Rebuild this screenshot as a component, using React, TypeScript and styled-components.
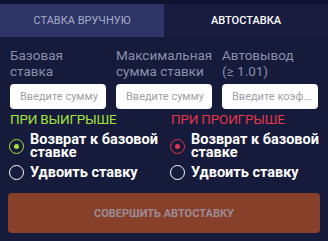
import React, { useState } from "react";
import styled, { createGlobalStyle } from "styled-components";

const Global = createGlobalStyle`
  html, body {
    margin: 0;
    padding: 0;
    background: #161a3b;
  }
  * {
    box-sizing: border-box;
  }
`;

const Panel = styled.div`
  width: 328px;
  height: 241px;
  background: #161a3b;
  border-top: 4px solid #0f1230;
  font-family: Roboto, "Liberation Sans", sans-serif;
  overflow: hidden;
`;

const Tabs = styled.div`
  display: grid;
  grid-template-columns: 164px 1fr;
  height: 33px;
`;

const Tab = styled.div<{ $active?: boolean }>`
  display: flex;
  align-items: center;
  justify-content: center;
  font-size: 11px;
  text-transform: uppercase;
  background: ${(p) => (p.$active ? "#181b3e" : "#2e3566")};
  color: ${(p) => (p.$active ? "#ffffff" : "#a5abc9")};
  font-weight: ${(p) => (p.$active ? 500 : 400)};
  cursor: pointer;
`;

const Fields = styled.div`
  display: grid;
  grid-template-columns: repeat(3, 96px);
  column-gap: 10px;
  padding: 0 10px;
  margin-top: 10px;
`;

const Field = styled.div`
  display: flex;
  flex-direction: column;
  gap: 5px;
`;

const Label = styled.div`
  height: 32px;
  font-size: 13.5px;
  line-height: 16px;
  color: #8a8fab;
`;

const Input = styled.input`
  width: 96px;
  height: 25px;
  border: none;
  border-radius: 4px;
  background: #ffffff;
  padding: 0 4px 0 10px;
  font-family: inherit;
  font-size: 11px;
  outline: none;
  &::placeholder {
    color: #a0a0a6;
  }
`;

const Outcomes = styled.div`
  display: grid;
  grid-template-columns: 161px 1fr;
  padding: 0 9px;
  margin-top: 3px;
`;

const Outcome = styled.div`
  display: flex;
  flex-direction: column;
  gap: 6px;
`;

const Heading = styled.div<{ $color: string }>`
  font-size: 13.5px;
  line-height: 14px;
  text-transform: uppercase;
  letter-spacing: -0.2px;
  color: ${(p) => p.$color};
  margin-left: 1px;
  margin-bottom: 1px;
`;

const Option = styled.label`
  display: flex;
  align-items: center;
  gap: 6px;
  color: #ffffff;
  font-size: 14.5px;
  font-weight: 700;
  line-height: 13px;
  cursor: pointer;
`;

const Dot = styled.span<{ $color: string; $on: boolean }>`
  flex: none;
  width: 15px;
  height: 15px;
  border-radius: 50%;
  border: 1.5px solid ${(p) => (p.$on ? p.$color : "#ffffff")};
  display: flex;
  align-items: center;
  justify-content: center;
  &::after {
    content: "";
    width: 5px;
    height: 5px;
    border-radius: 50%;
    background: ${(p) => p.$color};
    display: ${(p) => (p.$on ? "block" : "none")};
  }
`;

const Submit = styled.button`
  display: block;
  width: 312px;
  height: 40px;
  margin: 13px 8px 0;
  border: none;
  border-radius: 4px;
  background: #87412a;
  color: #9c8b95;
  font-family: inherit;
  font-size: 11px;
  font-weight: 700;
  text-transform: uppercase;
  cursor: default;
`;

const outcomes = [
  { key: "win", title: "При выигрыше", color: "#a3e23a" },
  { key: "loss", title: "При проигрыше", color: "#e2364a" },
];

const choices = ["Возврат к базовой ставке", "Удвоить ставку"];

export default function App() {
  const [tab, setTab] = useState(1);
  const [picked, setPicked] = useState<Record<string, number>>({ win: 0, loss: 0 });

  return (
    <>
      <Global />
      <Panel>
        <Tabs>
          <Tab $active={tab === 0} onClick={() => setTab(0)}>
            Ставка вручную
          </Tab>
          <Tab $active={tab === 1} onClick={() => setTab(1)}>
            Автоставка
          </Tab>
        </Tabs>
        <Fields>
          <Field>
            <Label>Базовая ставка</Label>
            <Input placeholder="Введите сумму" />
          </Field>
          <Field>
            <Label>Максимальная сумма ставки</Label>
            <Input placeholder="Введите сумму" />
          </Field>
          <Field>
            <Label>Автовывод (≥{"\u00a0"}1.01)</Label>
            <Input placeholder="Введите коэф..." />
          </Field>
        </Fields>
        <Outcomes>
          {outcomes.map((o) => (
            <Outcome key={o.key}>
              <Heading $color={o.color}>{o.title}</Heading>
              {choices.map((c, i) => (
                <Option key={c} onClick={() => setPicked({ ...picked, [o.key]: i })}>
                  <Dot $color={o.color} $on={picked[o.key] === i} />
                  <span>{c}</span>
                </Option>
              ))}
            </Outcome>
          ))}
        </Outcomes>
        <Submit disabled>Совершить автоставку</Submit>
      </Panel>
    </>
  );
}
